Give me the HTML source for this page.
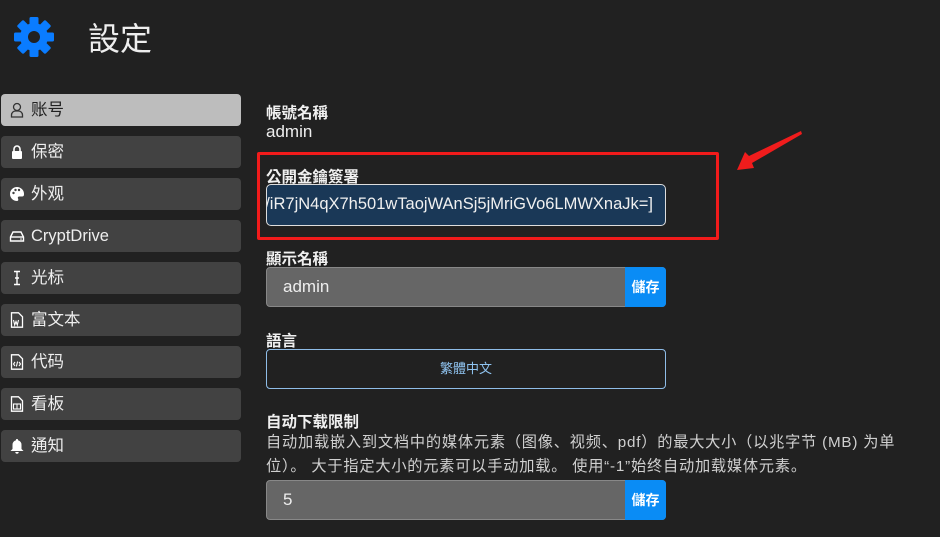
<!DOCTYPE html>
<html><head><meta charset="utf-8"><style>
*{margin:0;padding:0;box-sizing:border-box}
body{width:940px;height:537px;background:#212121;font-family:"Liberation Sans","Noto Sans CJK TC",sans-serif;color:#e8e8e8;position:relative;overflow:hidden}
.a{position:absolute}
.nav{position:absolute;left:1px;width:240px;height:32px;background:#424242;border-radius:4px;font-size:16.5px;line-height:32px;padding-left:30px;color:#eee}
.nav.act{background:#bdbdbd;color:#222}
.nav svg{position:absolute;left:8px;top:8px}
.lbl{position:absolute;left:266px;font-size:15.5px;font-weight:bold;color:#f0f0f0}
.inp{position:absolute;left:266px;width:400px;height:40px;background:#666;border:1px solid #888;border-radius:4px;color:#eee;font-size:17px;line-height:38px;padding-left:16px}
.btn{position:absolute;right:-1px;top:-1px;width:41px;height:40px;background:#0a8cf5;border-radius:0 4px 4px 0;color:#fff;font-weight:bold;font-size:14px;text-align:center;line-height:40px}
</style></head><body>
<svg class="a" style="left:14px;top:17px" width="40" height="40" viewBox="-20 -20 40 40">
<g fill="#0a7cff">
<circle r="14"/>
<rect x="-4.5" y="-20" width="9" height="40" rx="1.5"/>
<rect x="-4.5" y="-20" width="9" height="40" rx="1.5" transform="rotate(45)"/>
<rect x="-4.5" y="-20" width="9" height="40" rx="1.5" transform="rotate(90)"/>
<rect x="-4.5" y="-20" width="9" height="40" rx="1.5" transform="rotate(135)"/>
</g><circle r="6" fill="#212121"/></svg>
<div class="a" style="left:88px;top:14px;font-size:32px;color:#eee">設定</div>

<div class="nav act" style="top:94px"><svg width="16" height="16" viewBox="0 0 16 16"><circle cx="8" cy="5" r="3.5" fill="none" stroke="#333" stroke-width="1.3"/><path d="M2.5 15v-2a4 4 0 0 1 4-4h3a4 4 0 0 1 4 4v2z" fill="none" stroke="#333" stroke-width="1.3"/></svg>账号</div>
<div class="nav" style="top:136px"><svg width="16" height="16" viewBox="0 0 16 16"><path d="M5 7V5a3 3 0 0 1 6 0v2" fill="none" stroke="#fff" stroke-width="1.6"/><rect x="3" y="7" width="10" height="8" rx="1" fill="#fff"/></svg>保密</div>
<div class="nav" style="top:178px"><svg width="16" height="16" viewBox="0 0 16 16"><path d="M8 1a7 7 0 0 0 0 14c1.5 0 1.5-1.5 1-2.5s0-2 1.5-2H13a2 2 0 0 0 2-2A7 7 0 0 0 8 1z" fill="#fff"/><circle cx="4.5" cy="7" r="1.2" fill="#424242"/><circle cx="6.5" cy="4" r="1.2" fill="#424242"/><circle cx="10" cy="4" r="1.2" fill="#424242"/></svg>外观</div>
<div class="nav" style="top:220px"><svg width="16" height="16" viewBox="0 0 16 16"><path d="M1.5 9l2.5-5h8l2.5 5v4h-13z" fill="none" stroke="#fff" stroke-width="1.4"/><line x1="1.5" y1="9" x2="14.5" y2="9" stroke="#fff" stroke-width="1.4"/><circle cx="12" cy="11" r=".8" fill="#fff"/></svg>CryptDrive</div>
<div class="nav" style="top:262px"><svg width="16" height="16" viewBox="0 0 16 16"><path d="M5 1.5h6M8 1.5v13M5 14.5h6M6 8h4" stroke="#fff" stroke-width="1.4" fill="none"/></svg>光标</div>
<div class="nav" style="top:304px"><svg width="16" height="16" viewBox="0 0 16 16"><path d="M2.5 .8h7l4 4v10.4h-11z" fill="none" stroke="#fff" stroke-width="1.3"/><path d="M4.5 8l1.2 5 1.3-3.5 1.3 3.5 1.2-5" fill="none" stroke="#fff" stroke-width="1.1"/></svg>富文本</div>
<div class="nav" style="top:346px"><svg width="16" height="16" viewBox="0 0 16 16"><path d="M2.5 .8h7l4 4v10.4h-11z" fill="none" stroke="#fff" stroke-width="1.3"/><path d="M6 8l-1.5 2 1.5 2M10 8l1.5 2-1.5 2M8.6 7.5l-1.2 5" fill="none" stroke="#fff" stroke-width="1.1"/></svg>代码</div>
<div class="nav" style="top:388px"><svg width="16" height="16" viewBox="0 0 16 16"><path d="M2.5 .8h7l4 4v10.4h-11z" fill="none" stroke="#fff" stroke-width="1.3"/><rect x="4.5" y="8" width="7" height="5" fill="none" stroke="#fff" stroke-width="1.1"/><line x1="8" y1="8" x2="8" y2="13" stroke="#fff"/></svg>看板</div>
<div class="nav" style="top:430px"><svg width="16" height="16" viewBox="0 0 16 16"><path d="M8 1a1 1 0 0 1 1 1.2A4.5 4.5 0 0 1 12.5 7v4l2 2H1.5l2-2V7A4.5 4.5 0 0 1 7 2.2 1 1 0 0 1 8 1z" fill="#fff"/><path d="M6.3 14a1.7 1.7 0 0 0 3.4 0z" fill="#fff"/></svg>通知</div>

<div class="lbl" style="top:101px">帳號名稱</div>
<div class="a" style="left:266px;top:122px;font-size:17px;color:#eee">admin</div>

<div class="a" style="left:257px;top:152px;width:462px;height:88px;border:3px solid #f21b1b;border-radius:2px"></div>
<div class="lbl" style="top:165px">公開金鑰簽署</div>
<div class="a" style="left:266px;top:184px;width:400px;height:42px;background:#1a3857;border:1.5px solid #ddd;border-radius:5px;overflow:hidden;font-size:16.5px;line-height:39px;color:#f0f0f0;white-space:nowrap;direction:rtl;padding-right:12px"><span style="direction:ltr;unicode-bidi:embed">[admin@example.com/iR7jN4qX7h501wTaojWAnSj5jMriGVo6LMWXnaJk=]</span></div>

<svg class="a" style="left:730px;top:125px" width="80" height="55" viewBox="730 125 80 55"><path d="M801 131 L749 156 L745 152 L737 170 L754 168 L752 163 L802 134z" fill="#f01c1c"/></svg>

<div class="lbl" style="top:247px">顯示名稱</div>
<div class="inp" style="top:267px">admin<div class="btn">儲存</div></div>

<div class="lbl" style="top:329px">語言</div>
<div class="a" style="left:266px;top:349px;width:400px;height:40px;border:1px solid #8fbde8;border-radius:4px;text-align:center;line-height:38px;font-size:13px;color:#8fc3f0">繁體中文</div>

<div class="lbl" style="top:410px;font-family:'Liberation Sans','Noto Sans CJK SC',sans-serif">自动下载限制</div>
<div class="a" style="left:266px;top:431px;white-space:nowrap;font-size:15.2px;letter-spacing:0.8px;line-height:24px;color:#d0d0d0;font-family:'Liberation Sans','Noto Sans CJK SC',sans-serif">自动加载嵌入到文档中的媒体元素（图像、视频、pdf）的最大大小（以兆字节 (MB) 为单<br>位）。 大于指定大小的元素可以手动加载。 使用“-1”始终自动加载媒体元素。</div>
<div class="inp" style="top:480px">5<div class="btn">儲存</div></div>
</body></html>
